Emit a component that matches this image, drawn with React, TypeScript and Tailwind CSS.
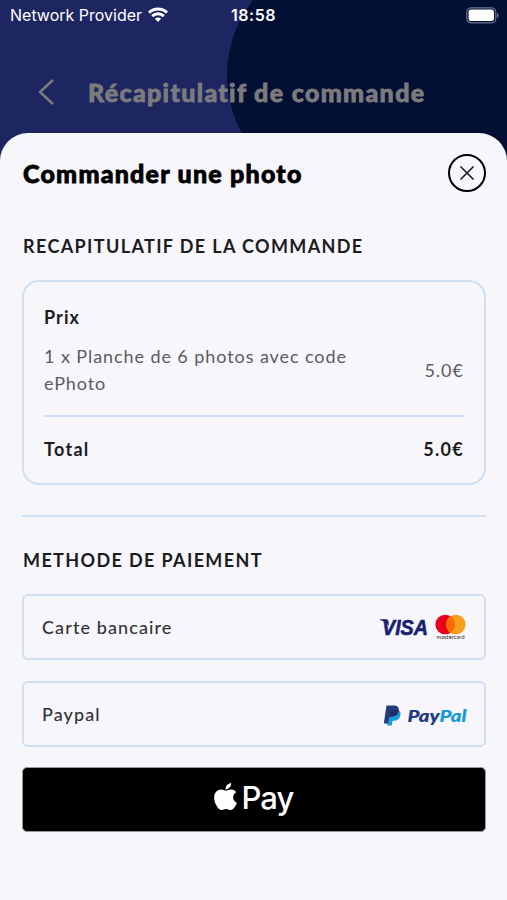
import type { ReactNode } from "react";
import { FaApple } from "react-icons/fa";

const WifiIcon = () => (
  <svg width="20" height="16" viewBox="0 0 20 16" fill="none" stroke="white" strokeWidth="2.9">
    <path d="M1 5.6C6 .8 14 .8 19 5.6" />
    <path d="M4.2 9.1c3.3-3.1 8.3-3.1 11.6 0" />
    <path d="M10 15l-3.1-3.2c1.7-1.6 4.5-1.6 6.2 0z" fill="white" stroke="none" />
  </svg>
);

const BatteryIcon = () => (
  <svg width="33" height="17" viewBox="0 0 33 17">
    <rect x=".8" y=".8" width="29" height="15" rx="4.5" fill="none" stroke="#6d7590" strokeWidth="1.2" />
    <rect x="2.6" y="2.6" width="25.4" height="11.4" rx="2.8" fill="white" />
    <path d="M31 6v5c2-.8 2-4.200 0-5z" fill="#6d7590" />
  </svg>
);

const VisaLogo = () => (
  <svg width="47" height="20" viewBox="0 0 47 20" className="overflow-visible">
    <path d="M0 2.200h6c1.500 0 2.200.8 2.500 2l.5 4.500C7 6 4 4.200 0 3z" fill="#1a1f71" />
    <text
      x="2"
      y="17.500"
      textLength="46"
      lengthAdjust="spacingAndGlyphs"
      fill="#1a1f71"
      stroke="#1a1f71"
      strokeWidth=".6"
      className="font-['Liberation_Sans',sans-serif] text-[21.500px] font-bold italic"
    >
      VISA
    </text>
  </svg>
);

const MastercardLogo = () => (
  <svg width="31" height="27" viewBox="0 0 31 27">
    <circle cx="10.200" cy="10.500" r="9.800" fill="#eb001b" />
    <circle cx="20.800" cy="10.500" r="9.800" fill="#f79e1b" />
    <path d="M15.500 2.300a9.800 9.800 0 0 1 0 16.400 9.800 9.800 0 0 1 0-16.400z" fill="#fb6a05" />
    <text x="1.500" y="25" textLength="28" fill="#231f20" className="font-['Lato',sans-serif] text-[5.500px]">
      mastercard
    </text>
  </svg>
);

const PaypalLogo = () => (
  <svg width="83" height="24" viewBox="0 0 83 24" className="overflow-visible">
    <path d="M6 6h8.500c3 .8 3.500 3 2.800 5.800-.8 3.500-3.300 5-6.200 5h-1.500l-.9 4.700H4.200z" fill="#179bd7" />
    <path d="M3.500 1.500h7.500c4 0 5.300 2.200 4.600 5.600-.8 3.900-3.500 5.400-6.600 5.400H6.500L5 19.500H.8z" fill="#253b80" />
    <path d="M7.500 5.800h8.200c.1 4.600-3.100 6.700-6.700 6.700H6.400z" fill="#222d65" />
    <text
      x="24.500"
      y="17.500"
      textLength="59"
      lengthAdjust="spacingAndGlyphs"
      strokeWidth=".2"
      className="font-['Lato',sans-serif] text-[17.500px] font-black italic"
    >
      <tspan fill="#253b80" stroke="#253b80">Pay</tspan>
      <tspan fill="#179bd7" stroke="#179bd7">Pal</tspan>
    </text>
  </svg>
);

const SectionTitle = ({ children }: { children: ReactNode }) => (
  <h2 className="pl-px text-[18px] leading-6 font-bold tracking-[1.37px] text-[#1c1c1e]">{children}</h2>
);

const PaymentOption = ({ label, children }: { label: string; children: ReactNode }) => (
  <button className="flex h-[66px] w-full items-center justify-between rounded-md border-2 border-[#cfe0f3] px-[18px]">
    <span className="text-[18px] leading-6 font-medium tracking-[1.1px] text-[#333336]">{label}</span>
    <span className="flex items-center">{children}</span>
  </button>
);

const App = () => {
  return (
    <div className="relative flex h-[900px] w-[507px] flex-col overflow-hidden bg-[#1e2661] font-['Lato',sans-serif]">
      <div className="absolute top-[-46px] left-[227px] h-[242px] w-[460px] rounded-full bg-[#030f33]" />

      <div className="relative grid h-[30px] grid-cols-3 items-center px-2.5 font-['Inter',sans-serif] text-white">
        <div className="flex items-center gap-1.5">
          <span className="text-[16px] whitespace-nowrap">Network Provider</span>
          <WifiIcon />
        </div>
        <span className="text-center text-[16px] font-semibold tracking-[0.5px]">18:58</span>
        <div className="-mr-0.5 flex justify-end">
          <BatteryIcon />
        </div>
      </div>

      <header className="relative flex h-[103px] items-center pt-[21px] pl-[38px] text-[#7b7b7d]">
        <svg width="16" height="26" viewBox="0 0 16 26" fill="none" stroke="currentColor" strokeWidth="2.600">
          <path d="M15 1L2 13l13 12" />
        </svg>
        <h1 className="pt-px pl-[34px] text-[25px] font-black tracking-[1.33px] whitespace-nowrap [-webkit-text-stroke:0.8px]">
          Récapitulatif de commande
        </h1>
      </header>

      <main className="relative flex flex-1 flex-col rounded-t-[28px] bg-[#f6f6fb] pt-[21px] pr-[21px] pl-[22px]">
        <div className="flex items-center justify-between">
          <h1 className="pl-px text-[25px] leading-8 font-black tracking-[1.22px] text-black [-webkit-text-stroke:0.8px]">
            Commander une photo
          </h1>
          <button aria-label="Fermer" className="flex size-[38px] items-center justify-center rounded-full border-2 border-black">
            <svg width="16" height="16" viewBox="0 0 16 16" stroke="#1c1c1e" strokeWidth="1.600">
              <path d="M1.500 1.500l13 13M14.500 1.500l-13 13" />
            </svg>
          </button>
        </div>

        <div className="mt-[42px]">
          <SectionTitle>RECAPITULATIF DE LA COMMANDE</SectionTitle>
        </div>

        <div className="mt-[22px] flex h-[205px] flex-col rounded-[17px] border-2 border-[#cfe0f3] px-5 pt-[23px]">
          <span className="text-[18px] leading-6 font-bold tracking-[1.1px] text-[#1c1c1e]">Prix</span>
          <div className="mt-3.5 flex items-center justify-between border-b-2 border-[#cfe0f3] pb-[18px] text-[18px] leading-[27px] text-[#5c5c60]">
            <p className="w-[330px] tracking-[0.92px]">1 x Planche de 6 photos avec code ePhoto</p>
            <span className="tracking-[1px]">5.0€</span>
          </div>
          <div className="mt-5 flex justify-between text-[18px] leading-6 font-bold tracking-[1.3px] text-[#1c1c1e]">
            <span>Total</span>
            <span>5.0€</span>
          </div>
        </div>

        <hr className="mt-[30px] border-t-2 border-[#cfe0f3]" />

        <div className="mt-[31px]">
          <SectionTitle>METHODE DE PAIEMENT</SectionTitle>
        </div>

        <div className="mt-[22px] flex flex-col gap-[21px]">
          <PaymentOption label="Carte bancaire">
            <VisaLogo />
            <span className="pt-px pl-2">
              <MastercardLogo />
            </span>
          </PaymentOption>
          <PaymentOption label="Paypal">
            <span className="pt-[3px]">
              <PaypalLogo />
            </span>
          </PaymentOption>
          <button className="-mt-px flex h-[65px] items-center justify-center rounded-[5px] border border-[#9a9a9d] bg-black pr-1 text-white">
            <FaApple className="mb-1.5 size-[31px]" />
            <span className="mb-1 font-['Inter',sans-serif] text-[31px] leading-none font-medium tracking-[-0.9px]">Pay</span>
          </button>
        </div>
      </main>
    </div>
  );
};

export default App;
